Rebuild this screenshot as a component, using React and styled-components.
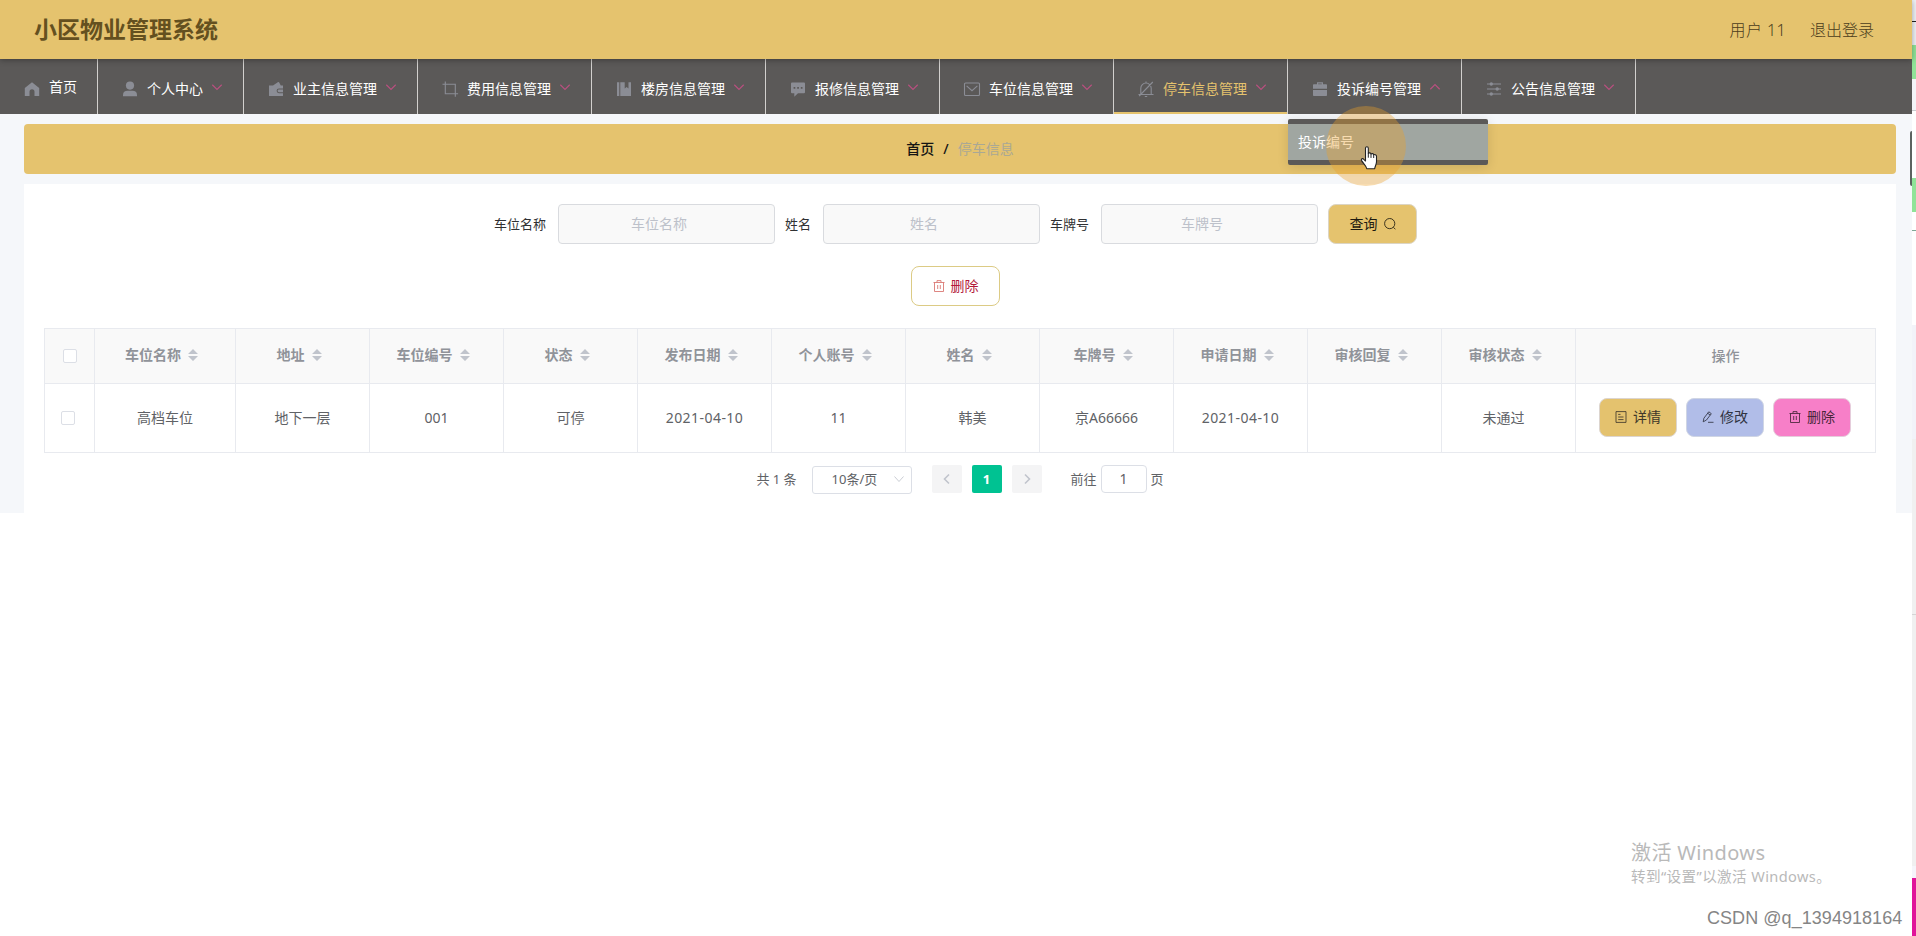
import React from "react";
import styled, { createGlobalStyle, css } from "styled-components";

const gold = "#e5c36e";
const dark = "#5b5958";

const GlobalStyle = createGlobalStyle`
  * { box-sizing: border-box; }
  body {
    margin: 0;
    background: #fff;
    color: #606266;
    font: 14px/20px "Noto Sans", "Noto Sans CJK SC", sans-serif;
    overflow: hidden;
  }
`;

const Screen = styled.div`
  position: relative;
  display: flex;
  width: 1916px;
  height: 936px;
`;
const Page = styled.div`
  flex: 1;
`;
const Edge = styled.div`
  width: 4px;
  background: linear-gradient(
    #eef1f6 0 21px, #222 21px 22px, #eef1f6 22px 45px,
    #90e398 45px 79px, #f3f4f8 79px 110px, #c9cccf 110px 111px,
    #fff 111px 178px, #90e398 178px 212px, #fff 212px 230px,
    #7fa896 230px 231px, #fff 231px 325px, #f2f3f9 325px 439px,
    #f0f0f0 439px 614px, #d5d5d5 614px 615px, #f0f0f0 615px 866px,
    #f5f5fb 866px 878px, #e0149a 878px
  );
`;

const Header = styled.header`
  position: relative;
  z-index: 2;
  display: flex;
  align-items: center;
  height: 59px;
  padding: 0 38px 0 34px;
  background: ${gold};
  box-shadow: 0 1px 6px rgba(0, 0, 0, 0.35);
  color: #4b3c1c;
`;
const Title = styled.h1`
  flex: 1;
  margin: 0;
  padding-bottom: 1px;
  font-size: 23px;
  line-height: 34px;
  font-weight: 700;
  color: #64501f;
`;
const HeaderLink = styled.span`
  margin-left: 24px;
  font-size: 16px;
  font-weight: 300;
  letter-spacing: ${(p) => (p.$wide ? 0.4 : 0)}px;
`;

const Nav = styled.nav`
  display: flex;
  height: 55px;
  background: ${dark};
`;
const NavItem = styled.div`
  position: relative;
  display: flex;
  align-items: center;
  padding: ${(p) => (p.$home ? "0 20px 0 20px" : "4px 20px 0 20px")};
  border-right: 1px solid #d2d0ce;
  color: ${(p) => (p.$active ? gold : "#fff")};
  box-shadow: ${(p) => (p.$active ? `inset 0 -2px 0 ${gold}` : "none")};
  > svg:first-child {
    margin: ${(p) => (p.$home ? "4px 8px 0 3px" : "0 8px 0 3px")};
  }
`;
const Arrow = styled.svg`
  width: 12px;
  height: 12px;
  margin: -4px 0 0 8px;
  fill: none;
  stroke: #b8507f;
  stroke-width: 1.2;
  transform: ${(p) => (p.$up ? "rotate(180deg)" : "none")};
`;
const Popup = styled.div`
  position: absolute;
  z-index: 5;
  top: 60px;
  left: 0;
  width: 200px;
  padding: 5px 0;
  border-radius: 2px;
  background: ${dark};
  box-shadow: 0 2px 12px rgba(0, 0, 0, 0.12);
`;
const PopupItem = styled.div`
  height: 36px;
  padding: 0 10px;
  line-height: 36px;
  background: #a0a6a1;
  color: #fff;
`;

const Body = styled.main`
  height: 399px;
  padding: 10px 16px 0 24px;
  background: #f5f7fa;
`;
const Breadcrumb = styled.div`
  display: flex;
  align-items: center;
  justify-content: center;
  gap: 9px;
  height: 50px;
  margin-bottom: 10px;
  border-radius: 4px;
  background: ${gold};
  color: #a9a895;
`;
const Crumb = styled.span`
  font-weight: ${(p) => (p.$strong ? 500 : 400)};
  color: ${(p) => (p.$strong ? "#141414" : "#a9a895")};
`;
const Panel = styled.section`
  height: 329px;
  padding: 20px 20px 0;
  background: #fff;
`;
const Form = styled.div`
  display: flex;
  justify-content: center;
  padding-right: 9px;
  margin-bottom: 22px;
`;
const Field = styled.label`
  display: flex;
  align-items: center;
  margin-right: 10px;
  font-size: 13px;
  color: #303133;
`;
const Input = styled.input`
  width: 217px;
  height: 40px;
  margin-left: 12px;
  padding: 0 30px 1px 15px;
  border: 1px solid #d9dbdf;
  border-radius: 4px;
  background: #f9f9f9;
  font: inherit;
  font-size: 14px;
  text-align: center;
  &::placeholder { color: #bdc1ca; opacity: 1; }
`;
const tones = {
  search: css`background: ${gold}; border-color: #dcd5c4; color: #1f1b10;`,
  outline: css`background: #fff; border-color: #dccb85; color: #b3193a;`,
  detail: css`background: #e4c26e; border-color: #dcd5cf; color: #40382a;`,
  edit: css`background: #b1bde8; border-color: #cfd5e4; color: #303442;`,
  remove: css`background: #f77fc8; border-color: #e5cddb; color: #482639;`,
};
const Button = styled.button`
  display: flex;
  align-items: center;
  justify-content: center;
  gap: 6px;
  width: ${(p) => (p.$small ? 78 : 89)}px;
  height: ${(p) => (p.$small ? 39 : 40)}px;
  padding: 0;
  border: 1px solid;
  border-radius: 8px;
  font: inherit;
  line-height: 20px;
  ${(p) => tones[p.$tone]}
`;

const Table = styled.div`
  margin-top: 22px;
  border: 1px solid #e8eaef;
  border-width: 1px 0 0 1px;
`;
const Row = styled.div`
  display: grid;
  grid-template-columns: 50px 141px repeat(10, 134px) 300px;
  height: ${(p) => (p.$head ? 55 : 69)}px;
  background: ${(p) => (p.$head ? "#f9f9f9" : "#fff")};
  color: ${(p) => (p.$head ? "#909399" : "#606266")};
  font-weight: ${(p) => (p.$head ? 700 : 400)};
`;
const Cell = styled.div`
  display: flex;
  align-items: center;
  justify-content: center;
  gap: ${(p) => p.$gap || 0}px;
  border: 1px solid #e8eaef;
  border-width: 0 1px 1px 0;
  padding-bottom: ${(p) => p.$lift || 0}px;
  padding-right: ${(p) => p.$pull || 0}px;
  letter-spacing: ${(p) => (p.$date ? 0.45 : 0)}px;
  font-weight: ${(p) => (p.$medium ? 500 : "inherit")};
`;
const Check = styled.span`
  width: 14px;
  height: 14px;
  border: 1px solid #dcdfe6;
  border-radius: 2px;
  background: #fff;
`;
const SortIcon = styled.svg`
  width: 10px;
  height: 12px;
  margin: 0 7px;
  fill: #c0c4cc;
`;

const Pager = styled.div`
  display: flex;
  justify-content: center;
  align-items: flex-start;
  padding-top: 12px;
  font-size: 13px;
  line-height: 28px;
`;
const Select = styled.div`
  display: flex;
  align-items: center;
  width: 100px;
  height: 28px;
  margin: 1px 20px 0 15px;
  padding: 0 6px 2px 19px;
  border: 1px solid #dcdfe6;
  border-radius: 3px;
  justify-content: space-between;
`;
const PageButton = styled.div`
  display: flex;
  align-items: center;
  justify-content: center;
  width: 30px;
  height: 28px;
  margin-right: 10px;
  border-radius: 2px;
  background: ${(p) => (p.$current ? "#00c292" : "#f4f4f5")};
  color: #fff;
  font-weight: 700;
`;
const Goto = styled.div`
  display: flex;
  margin-left: 19px;
`;
const GotoInput = styled.div`
  width: 46px;
  height: 28px;
  margin: 0 4px 0 4px;
  border: 1px solid #dcdfe6;
  border-radius: 4px;
  line-height: 26px;
  font-size: 14px;
  text-align: center;
`;

const Thin = styled.svg`
  width: ${(p) => p.$size || 12}px;
  height: ${(p) => p.$size || 12}px;
  fill: none;
  stroke: ${(p) => p.$color || "currentColor"};
  stroke-width: ${(p) => p.$weight || 0.85};
`;
const ScrollHandle = styled.div`
  position: absolute;
  top: 131px;
  left: 1910px;
  width: 2px;
  height: 55px;
  border-radius: 2px 0 0 2px;
  background: #5c6360;
`;
const ClickHalo = styled.div`
  position: absolute;
  z-index: 8;
  top: 106px;
  left: 1326px;
  width: 80px;
  height: 80px;
  border-radius: 50%;
  background: rgba(236, 160, 42, 0.37);
`;
const Pointer = styled.svg`
  position: absolute;
  z-index: 9;
  top: 146px;
  left: 1360px;
  width: 18px;
  height: 24px;
`;
const Activation = styled.div`
  position: absolute;
  top: 839px;
  left: 1631px;
  color: #b9b9b9;
  font-size: 14.6px;
  line-height: 19px;
  letter-spacing: 0.38px;
  white-space: nowrap;
`;
const ActivationTitle = styled.div`
  font-size: 20px;
  line-height: 28px;
`;
const Credit = styled.div`
  position: absolute;
  top: 906px;
  left: 1707px;
  color: #858585;
  font: 18px/24px "Liberation Sans", sans-serif;
  letter-spacing: 0.05px;
  white-space: nowrap;
`;

const grey = "#8b8d95";
const stroke = { fill: "none", stroke: grey, strokeWidth: 1.1 };
const navShapes = {
  home: <path d="M9 2.2 16.2 8v8h-4.7v-4.3a2.5 2.5 0 0 0-5 0V16H1.8V8z" strokeLinejoin="round" />,
  user: <><circle cx="9" cy="5.6" r="4.1" /><path d="M2 16.3v-1.2C2 12 3.8 10.8 6.4 10.8h5.2c2.6 0 4.4 1.2 4.4 4.3v1.2z" /></>,
  wallet: <path fillRule="evenodd" d="M2 5.600h4l4.800-3.300c.6-.4 1.100-.2 1.400.3l1.600 3H16v2.800h-4a2.400 2.400 0 0 0 0 4.800h4v2.300a.6.6 0 0 1-.6.600H2.600a.6.6 0 0 1-.6-.600zM12 9.400h4v2.800h-4a1.400 1.400 0 0 1 0-2.800z" />,
  crop: <path {...stroke} d="M1.500 4.300h12.800v12.500M4.300 1.500v12.300h12.800" />,
  book: <path d="M2 2.200h2.300v13.800H2zM5.300 2.200h4.400v6.300l1.900-1.500 1.900 1.500V2.200H16V16H5.300z" />,
  chat: <path fillRule="evenodd" d="M3 2.500h12a1 1 0 0 1 1 1v8.800a1 1 0 0 1-1 1H9L5.300 16.700v-3.400H3a1 1 0 0 1-1-1V3.500a1 1 0 0 1 1-1zM4.600 7v1.700h1.700V7zm3.600 0v1.700h1.700V7zm3.600 0v1.700h1.700V7z" />,
  mail: <path {...stroke} d="M2.500 3h13a1 1 0 0 1 1 1v10.500a1 1 0 0 1-1 1h-13a1 1 0 0 1-1-1V4a1 1 0 0 1 1-1zM3.600 5.800 9 10.700l5.400-4.900" />,
  bell: <path {...stroke} d="M3.800 14.300V8.200a5.200 5.200 0 0 1 10.400 0v6.100M1.500 14.500h15M9 1.500V3M7.800 16.500h2.400M15.800 2 2.200 16" />,
  briefcase: <path fillRule="evenodd" d="M6 4.300V2.200h6v2.100h3.200a.8.8 0 0 1 .8.800v3.700H2V5.100a.8.8 0 0 1 .8-.8zm1.200 0h3.600v-.9H7.200zM2 10h14v5.200a.8.8 0 0 1-.8.800H2.800a.8.8 0 0 1-.8-.8z" />,
  sliders: <><path {...stroke} d="M2 4h14M2 9h14M2 14h14" /><circle cx="6.300" cy="4" r="1.700" /><circle cx="12.200" cy="9" r="1.700" /><circle cx="6.300" cy="14" r="1.700" /></>,
};
const NavIcon = ({ name }) => (
  <svg width="18" height="18" viewBox="0 0 18 18" fill={grey}>{navShapes[name]}</svg>
);

const Trash = ({ color }) => (
  <Thin viewBox="0 0 12 12" $color={color}>
    <path d="M.5 2.500h11M1.500 2.500v9h9v-9M4 2.300V.6h4v1.700M4.700 5v4M7.300 5v4" />
  </Thin>
);
const Note = () => (
  <Thin viewBox="0 0 12 12">
    <path d="M1 .6h10v10.800H1zM3.200 3.400h2.300M3.200 6h5.300M3.200 8.600h5.300" />
  </Thin>
);
const Pen = () => (
  <Thin viewBox="0 0 12 12">
    <path d="M1.200 10.800 1.900 7.200 6.800.8 9.300 2.700 4.400 9.100zM5.700 2.200 8.200 4.100M6 11.300h5.500" />
  </Thin>
);
const Search = () => (
  <Thin viewBox="0 0 12 12"><circle cx="5.700" cy="5.600" r="5.100" /><path d="m9.400 9.300 2 2" /></Thin>
);

const menus = [
  ["user", "个人中心"],
  ["wallet", "业主信息管理"],
  ["crop", "费用信息管理"],
  ["book", "楼房信息管理"],
  ["chat", "报修信息管理"],
  ["mail", "车位信息管理"],
  ["bell", "停车信息管理"],
  ["briefcase", "投诉编号管理"],
  ["sliders", "公告信息管理"],
];
const columns = ["车位名称", "地址", "车位编号", "状态", "发布日期", "个人账号", "姓名", "车牌号", "申请日期", "审核回复", "审核状态"];
const record = ["高档车位", "地下一层", "001", "可停", "2021-04-10", "11", "韩美", "京A66666", "2021-04-10", "", "未通过"];

export default function App() {
  return (
    <Screen>
      <GlobalStyle />
      <Page>
        <Header>
          <Title>小区物业管理系统</Title>
          <HeaderLink $wide>用户 11</HeaderLink>
          <HeaderLink>退出登录</HeaderLink>
        </Header>
        <Nav>
          <NavItem $home><NavIcon name="home" />首页</NavItem>
          {menus.map(([icon, label]) => {
            const open = icon === "briefcase";
            return (
              <NavItem key={icon} $active={icon === "bell"}>
                <NavIcon name={icon} />
                {label}
                <Arrow viewBox="0 0 12 12" $up={open}><path d="m1.300 3.800 4.700 4.600 4.700-4.600" /></Arrow>
                {open && <Popup><PopupItem>投诉编号</PopupItem></Popup>}
              </NavItem>
            );
          })}
        </Nav>
        <Body>
          <Breadcrumb>
            <Crumb $strong>首页</Crumb>
            <Crumb $strong>/</Crumb>
            <Crumb>停车信息</Crumb>
          </Breadcrumb>
          <Panel>
            <Form>
              {["车位名称", "姓名", "车牌号"].map((name) => (
                <Field key={name}>{name}<Input placeholder={name} /></Field>
              ))}
              <Button $tone="search">查询<Search /></Button>
            </Form>
            <Form>
              <Button $tone="outline"><Trash color="#d8706c" />删除</Button>
            </Form>
            <Table>
              <Row $head>
                <Cell><Check /></Cell>
                {columns.map((name) => (
                  <Cell key={name} $lift={2}>
                    {name}
                    <SortIcon viewBox="0 0 10 12"><path d="M5 0 10 5H0zM5 12 0 7h10z" /></SortIcon>
                  </Cell>
                ))}
                <Cell $medium>操作</Cell>
              </Row>
              <Row>
                <Cell $pull={3}><Check /></Cell>
                {record.map((value, i) => (
                  <Cell key={i} $date={value.includes("-")} $pull={value === "未通过" ? 10 : 0}>{value}</Cell>
                ))}
                <Cell $gap={9} $lift={2} $pull={1}>
                  <Button $small $tone="detail"><Note />详情</Button>
                  <Button $small $tone="edit"><Pen />修改</Button>
                  <Button $small $tone="remove"><Trash />删除</Button>
                </Cell>
              </Row>
            </Table>
            <Pager>
              <span>共 1 条</span>
              <Select>
                10条/页
                <Thin viewBox="0 0 12 12" $color="#c0c4cc"><path d="m1.500 3.500 4.500 5 4.500-5" /></Thin>
              </Select>
              <PageButton><Thin viewBox="0 0 12 12" $color="#c0c4cc" $weight={1.6}><path d="M8 1.500 3.500 6 8 10.500" /></Thin></PageButton>
              <PageButton $current>1</PageButton>
              <PageButton><Thin viewBox="0 0 12 12" $color="#c0c4cc" $weight={1.6}><path d="M4 1.500 8.500 6 4 10.500" /></Thin></PageButton>
              <Goto>前往<GotoInput>1</GotoInput>页</Goto>
            </Pager>
          </Panel>
        </Body>
      </Page>
      <Edge />
      <ScrollHandle />
      <ClickHalo />
      <Pointer viewBox="0 0 18 24">
        <path
          d="M5.500 15V2.200C5.500.3 8.300.3 8.300 2.200v5.300c.5-1 2.500-.8 2.700.6.6-.9 2.500-.7 2.700.7.800-.7 2.800-.2 2.800 1.500v5.500c0 3-1.500 4-1.800 7H6.800c-.4-3-3.300-5-5.200-8.200-.9-1.600 1-2.700 2.200-1.300z"
          fill="#fff" stroke="#222" strokeWidth="1.100" strokeLinejoin="round"
        />
        <path d="M8.300 7.500v4.200M11 8.200v3.700M13.700 9v3" stroke="#222" strokeWidth="1" />
      </Pointer>
      <Activation>
        <ActivationTitle>激活 Windows</ActivationTitle>
        转到“设置”以激活 Windows。
      </Activation>
      <Credit>CSDN @q_1394918164</Credit>
    </Screen>
  );
}
